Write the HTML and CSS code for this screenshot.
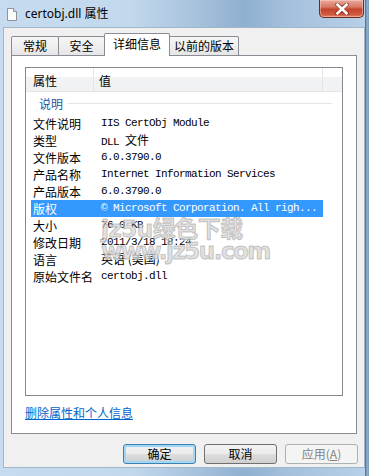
FILE: index.html
```html
<!DOCTYPE html>
<html>
<head>
<meta charset="utf-8">
<link rel="stylesheet" href="styles.css">
</head>
<body>
<div class="window">
  <div class="titlebar">
    <svg class="ticon" width="10" height="13" viewBox="0 0 10 13">
      <path d="M0.5 0.5 H6.5 L9.5 3.5 V12.5 H0.5 Z" fill="#fbfbfb" stroke="#8d949c"/>
      <path d="M6.5 0.5 V3.5 H9.5" fill="#dfe3e8" stroke="#8d949c"/>
    </svg>
    <span class="title">certobj.dll 属性</span>
    <div class="close">
      <svg width="16" height="12" viewBox="0 0 16 12">
        <path d="M3 1.5 L8 5 L13 1.5 M3 10.5 L8 7 L13 10.5" fill="none" stroke="#5a1a10" stroke-width="4" stroke-linecap="round" opacity="0.55"/>
        <path d="M3.5 1.8 L12.5 10.2 M12.5 1.8 L3.5 10.2" fill="none" stroke="#ffffff" stroke-width="2.6" stroke-linecap="square"/>
      </svg>
    </div>
  </div>
  <div class="client">
    <div class="tabs">
      <div class="tab t1">常规</div>
      <div class="tab t2">安全</div>
      <div class="tab sel">详细信息</div>
      <div class="tab t4">以前的版本</div>
    </div>
    <div class="panel">
      <div class="list">
        <div class="head">
          <div class="hc c1">属性</div>
          <div class="hc c2">值</div>
          <div class="hc c3"></div>
        </div>
        <div class="group"><span>说明</span><i class="gline"></i></div>
        <div class="row"><span class="k">文件说明</span><span class="v">IIS CertObj Module</span></div>
        <div class="row"><span class="k">类型</span><span class="v">DLL <span class="cj">文件</span></span></div>
        <div class="row"><span class="k">文件版本</span><span class="v">6.0.3790.0</span></div>
        <div class="row"><span class="k">产品名称</span><span class="v">Internet Information Services</span></div>
        <div class="row"><span class="k">产品版本</span><span class="v">6.0.3790.0</span></div>
        <div class="row selrow"><span class="k">版权</span><span class="v">© Microsoft Corporation. All righ...</span></div>
        <div class="row"><span class="k">大小</span><span class="v">76.0 KB</span></div>
        <div class="row"><span class="k">修改日期</span><span class="v">2011/3/18 18:24</span></div>
        <div class="row"><span class="k">语言</span><span class="v"><span class="cj">英语 (美国)</span></span></div>
        <div class="row"><span class="k">原始文件名</span><span class="v">certobj.dll</span></div>
        <div class="wm">
          <div class="wm1">jz5u绿色下载</div>
          <div class="wm2">www.jz5u.com</div>
        </div>
      </div>
      <a class="link">删除属性和个人信息</a>
    </div>
    <div class="buttons">
      <div class="btn ok">确定</div>
      <div class="btn">取消</div>
      <div class="btn dis">应用(<u>A</u>)</div>
    </div>
  </div>
</div>
</body>
</html>
```

FILE: styles.css
```css
* { box-sizing: border-box; margin: 0; padding: 0; }
html, body { width: 369px; height: 476px; overflow: hidden; }
body {
  font-family: "Noto Sans CJK SC", "Noto Sans", sans-serif;
  font-size: 12px;
  color: #000;
}
.window {
  width: 369px;
  height: 476px;
  display: flex;
  flex-direction: column;
  background:
    linear-gradient(90deg, rgba(0,0,0,0) 0, rgba(0,0,0,0) 365px, #4f6478 365px, #8fb2d2 367px, #7e9fbe 369px),
    linear-gradient(90deg, #c6dbef 0%, #c2d8ed 35%, #a9c4de 52%, #8fb0cf 66%, #a4c0dc 78%, #b9d1e9 100%);
}
.titlebar {
  height: 27px;
  display: flex;
  align-items: flex-start;
  padding-left: 7px;
}
.ticon { margin-top: 8px; flex: none; }
.title {
  margin-left: 8px;
  margin-top: 5px;
  font-family: "Noto Sans", "Noto Sans CJK SC", sans-serif;
  font-size: 12px;
  line-height: 17px;
  color: #000;
}
.close {
  margin-left: auto;
  margin-right: 5px;
  width: 45px;
  height: 18px;
  border: 1px solid #6d2a20;
  border-top: none;
  border-radius: 0 0 5px 5px;
  background: linear-gradient(#e9a99b 0%, #d97a66 40%, #c5432c 55%, #cf5a40 85%, #e0836a 100%);
  box-shadow: inset 0 0 0 1px rgba(255,220,210,0.45);
  display: flex;
  align-items: center;
  justify-content: center;
}
.client {
  margin: 0 4px 0 3px;
  height: 441px;
  background: #f0f0f0;
  border: 1px solid #a2b6ca;
  padding: 5px 7px 0 7px;
}
.tabs {
  display: flex;
  align-items: flex-end;
  height: 22px;
}
.tab {
  height: 19px;
  border: 1px solid #898c95;
  border-bottom: none;
  border-radius: 2px 2px 0 0;
  background: linear-gradient(#f6f6f6, #e6e6e6);
  text-align: center;
  line-height: 18px;
  font-size: 12px;
}
.t1 { width: 48px; }
.t2 { width: 47px; margin-left: -1px; }
.sel {
  width: 66px;
  margin-left: -1px;
  height: 23px;
  margin-bottom: -1px;
  background: #fff;
  position: relative;
  z-index: 1;
  line-height: 20px;
}
.t4 { width: 70px; margin-left: -1px; }
.panel {
  height: 379px;
  border: 1px solid #898c95;
  background: #fff;
  padding: 11px 0 0 13px;
}
.list {
  width: 318px;
  height: 329px;
  border: 1px solid #828790;
  background: #fff;
  position: relative;
  overflow: hidden;
}
.head {
  height: 24px;
  display: flex;
  border-bottom: 1px solid #e3e5e8;
  background: linear-gradient(#ffffff 0%, #ffffff 40%, #f2f3f5 40%, #f0f1f3 100%);
}
.hc {
  line-height: 18px;
  padding-top: 4px;
  height: 23px;
}
.c1 { width: 68px; padding-left: 7px; border-right: 1px solid #e3e5e8; }
.c2 { width: 229px; padding-left: 5px; border-right: 1px solid #e3e5e8; }
.c3 { flex: 1; }
.group {
  height: 23px;
  display: flex;
  align-items: center;
  padding-left: 13px;
  color: #2452a0;
}
.gline {
  flex: 1;
  height: 1px;
  background: #e2e6ec;
  margin-left: 5px;
  margin-right: 10px;
}
.row {
  height: 17px;
  margin-left: 5px;
  width: 292px;
  display: flex;
  align-items: center;
  line-height: 17px;
  white-space: nowrap;
}
.k { width: 70px; padding-left: 2px; flex: none; }
.v {
  font-family: "Liberation Mono", "Noto Sans CJK SC", monospace;
  font-size: 11px;
  letter-spacing: -0.6px;
}
.cj {
  font-family: "Noto Sans CJK SC", sans-serif;
  font-size: 12px;
  letter-spacing: 0;
}
.selrow { background: #3399ff; color: #fff; }
.wm {
  position: absolute;
  left: 75px;
  top: 149px;
  pointer-events: none;
  font-family: "DejaVu Sans", "Noto Sans CJK SC", sans-serif;
  font-weight: bold;
  color: rgba(200,200,200,0.55);
  -webkit-text-stroke: 1px rgba(140,140,140,0.45);
  text-shadow: 1px 1px 0 rgba(255,255,255,0.6);
}
.wm1 { font-size: 23px; line-height: 25px; letter-spacing: -0.5px; }
.wm2 { font-size: 23px; line-height: 21px; letter-spacing: -1.5px; margin-top: -1px; }
.link {
  display: block;
  margin-top: 9px;
  line-height: 16px;
  color: #0066cc;
  text-decoration: underline;
  width: max-content;
}
.buttons {
  display: flex;
  justify-content: flex-end;
  gap: 8px;
  margin-top: 10px;
  margin-right: -1px;
}
.btn {
  width: 73px;
  height: 20px;
  border: 1px solid #707070;
  border-radius: 3px;
  background: linear-gradient(#f2f2f2 0%, #ebebeb 50%, #dddddd 50%, #cfcfcf 100%);
  text-align: center;
  line-height: 18px;
  font-size: 12px;
}
.ok {
  border-color: #3c7fb1;
  box-shadow: inset 0 0 0 2px #9fd8f7;
}
.dis {
  border-color: #adb2b5;
  background: #f4f4f4;
  color: #838383;
}
```
